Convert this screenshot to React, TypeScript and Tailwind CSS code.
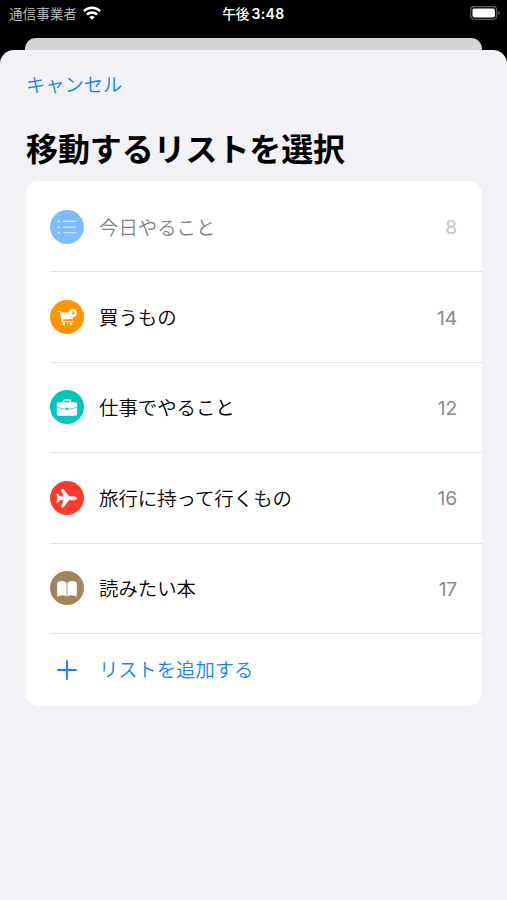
import type { ReactNode } from "react";
import clsx from "clsx";

type ListItem = {
	name: string;
	count: number;
	color: string;
	icon: ReactNode;
	disabled?: boolean;
};

// icons share a 34x34 viewBox, the same size as the round badge
const BulletIcon = () => (
	<svg viewBox="0 0 34 34" className="size-full opacity-75" fill="#fff" stroke="#fff" strokeLinecap="round">
		<path d="M13.2 11.4H26M13.2 17.1H26M13.2 22.8H26" strokeWidth="1.1" />
		<g stroke="none">
			<circle cx="8.7" cy="11.4" r="1.2" />
			<circle cx="8.7" cy="17.1" r="1.2" />
			<circle cx="8.7" cy="22.8" r="1.2" />
		</g>
	</svg>
);

const CartIcon = () => (
	<svg viewBox="0 0 34 34" className="size-full" fill="none" stroke="#fff" strokeLinecap="round" strokeLinejoin="round">
		<path d="M7.9 11.3h2.2l2.6 10.3h10.6" strokeWidth="1.2" />
		<path d="M10.6 12.4h8c.2 2.9 2 5 4.9 5.2l-.6 1.3-10.5.7z" fill="#fff" stroke="none" />
		<circle cx="23" cy="13" r="3.9" fill="#fff" stroke="none" />
		<path d="M23 11.6v2.800M21.600 13h2.800" stroke="#ff9500" strokeWidth="1.1" />
		<circle cx="13.8" cy="23.9" r="1.3" fill="#fff" stroke="none" />
		<circle cx="21" cy="23.9" r="1.3" fill="#fff" stroke="none" />
	</svg>
);

const BriefcaseIcon = () => (
	<svg viewBox="0 0 34 34" className="size-full" fill="#fff">
		<path d="M13.5 13v-1.8c0-.8.5-1.2 1.3-1.2h4.4c.8 0 1.3.4 1.3 1.2V13" fill="none" stroke="#fff" strokeWidth="1.4" />
		<rect x="6.8" y="12.3" width="20.4" height="13.4" rx="2" />
		<path d="M6.8 17c3.4 1.5 6.800 2.200 10.200 2.200s6.800-.7 10.200-2.200" fill="none" stroke="#00c7be" strokeWidth=".8" />
		<rect x="15.5" y="18" width="3" height="1.800" rx=".8" fill="#00c7be" />
	</svg>
);

const PlaneIcon = () => (
	<svg viewBox="0 0 34 34" className="size-full" fill="#fff" stroke="#fff" strokeWidth=".3">
		<path d="M27 17.3c0 .9-1.6 1.7-3.4 1.7h-4.5l-5.2 6.8c-.2.3-.5.4-.8.4h-1.2c-.4 0-.6-.3-.5-.7l2.3-6.5h-3.6l-1.9 2.3c-.2.2-.4.3-.7.3h-.6c-.3 0-.4-.2-.4-.5l1-3.8-1-3.8c0-.3.1-.5.4-.5h.6c.3 0 .5.1.7.3l1.9 2.3h3.6l-2.3-6.5c-.1-.4.1-.7.5-.7h1.2c.3 0 .6.1.8.4l5.2 6.8h4.5c1.8 0 3.4.8 3.4 1.7z" />
	</svg>
);

const BookIcon = () => (
	<svg viewBox="0 0 34 34" className="size-full" fill="#fff">
		<path d="M16.6 12.3v13.2c-1-.8-2.5-1.2-4.2-1.2-1.5 0-2.9.3-4 1-.5.3-1.2.1-1.2-.6V12.2c0-.4.2-.7.5-.9 1.2-.8 2.8-1.2 4.6-1.2 1.9 0 3.5.8 4.3 2.2z" />
		<path d="M17.4 12.3v13.2c1-.8 2.5-1.2 4.2-1.2 1.5 0 2.9.3 4 1 .5.3 1.2.1 1.2-.6V12.2c0-.4-.2-.7-.5-.9-1.2-.8-2.8-1.2-4.6-1.2-1.9 0-3.5.8-4.3 2.2z" />
	</svg>
);

const lists: ListItem[] = [
	{ name: "今日やること", count: 8, color: "bg-[#007aff]", icon: <BulletIcon />, disabled: true },
	{ name: "買うもの", count: 14, color: "bg-[#ff9500]", icon: <CartIcon /> },
	{ name: "仕事でやること", count: 12, color: "bg-[#00c7be]", icon: <BriefcaseIcon /> },
	{ name: "旅行に持って行くもの", count: 16, color: "bg-[#ff3b30]", icon: <PlaneIcon /> },
	{ name: "読みたい本", count: 17, color: "bg-[#a2845e]", icon: <BookIcon /> },
];

function StatusBar() {
	return (
		<div className="grid h-[38px] grid-cols-3 items-start px-[9px] text-white">
			<div className="flex h-[27px] items-center gap-[6px]">
				<span className="text-[13.6px] font-[350] whitespace-nowrap text-[#c4c4c4]">通信事業者</span>
				<svg viewBox="0 0 18 14" className="-mt-[2px] h-[14px] w-[18px]" fill="none" stroke="#fff" strokeWidth="2.4">
					<path d="M.9 5C5.5.7 12.5.7 17.1 5" />
					<path d="M3.9 8.5c2.9-2.7 7.3-2.7 10.2 0" />
					<path d="M9 13.8 6.2 11c1.6-1.5 4-1.5 5.6 0z" fill="#fff" stroke="none" />
				</svg>
			</div>
			<div className="flex h-[27px] items-center justify-center gap-[2px] text-[13.6px] font-medium whitespace-nowrap">
				<span>午後</span>
				<span className="font-['Inter','Noto_Sans_CJK_JP',sans-serif] text-[14px] font-semibold tracking-[0.4px]">3:48</span>
			</div>
			<div className="flex h-[27px] items-center justify-end">
				<svg viewBox="0 0 31 14" className="-mt-px -mr-[3px] h-[14px] w-[31px]">
					<rect x=".7" y=".7" width="26" height="12.6" rx="3.5" fill="none" stroke="#5c5c5c" strokeWidth="1.2" />
					<rect x="2.5" y="2.5" width="22.4" height="9" rx="1.8" fill="#fff" />
					<path d="M28.3 4.8c1.9.7 1.9 3.7 0 4.4z" fill="#5c5c5c" />
				</svg>
			</div>
		</div>
	);
}

function ListRow({ item }: { item: ListItem }) {
	return (
		<li className="pl-[25px]">
			<button
				disabled={item.disabled}
				className="flex h-[90.4px] w-full items-center border-b border-[#e3e3e5] pr-[25px] text-left"
			>
				<span className={clsx("flex flex-1 items-center gap-[15px]", item.disabled && "opacity-50")}>
					<span className={clsx("size-[34px] shrink-0 rounded-full", item.color)}>{item.icon}</span>
					<span className="-mt-px text-[19.4px] font-[350] text-black">{item.name}</span>
				</span>
				<span
					className={clsx(
						"pt-[2px] font-['Inter',sans-serif] text-[19.3px] tracking-[-0.2px]",
						item.disabled ? "text-[#c4c4c7]" : "text-[#8a8a8e]"
					)}
				>
					{item.count}
				</span>
			</button>
		</li>
	);
}

export default function App() {
	return (
		<div className="flex h-[900px] w-[507px] flex-col overflow-hidden bg-black font-['Noto_Sans_CJK_JP',sans-serif]">
			<StatusBar />

			{/* edge of the screen behind the sheet */}
			<div className="mx-[25px] h-[12px] shrink-0 rounded-t-[11px] bg-[#d4d4d6]" />

			<main className="flex-1 rounded-t-[14px] bg-[#f1f1f6] px-[25px]">
				<button className="mt-[20px] ml-px block h-[28px] text-[19.3px] leading-[28px] font-[350] text-[#1681f5]">
					キャンセル
				</button>
				<h1 className="mt-[25px] ml-px h-[48px] text-[32px] leading-[48px] font-bold tracking-[-0.1px] text-black">
					移動するリストを選択
				</h1>

				<ul className="mt-[10px] rounded-[14px] bg-white pt-px">
					{lists.map((item) => (
						<ListRow key={item.name} item={item} />
					))}
					<li>
						<button className="flex h-[72px] w-full items-center gap-[15px] pl-[25px] text-[19.3px] font-[350] text-[#1681f5]">
							<svg viewBox="0 0 34 34" className="size-[34px]" fill="none" stroke="currentColor" strokeWidth="1.9" strokeLinecap="round">
								<path d="M17 8v18M8 17h18" />
							</svg>
							リストを追加する
						</button>
					</li>
				</ul>
			</main>
		</div>
	);
}
